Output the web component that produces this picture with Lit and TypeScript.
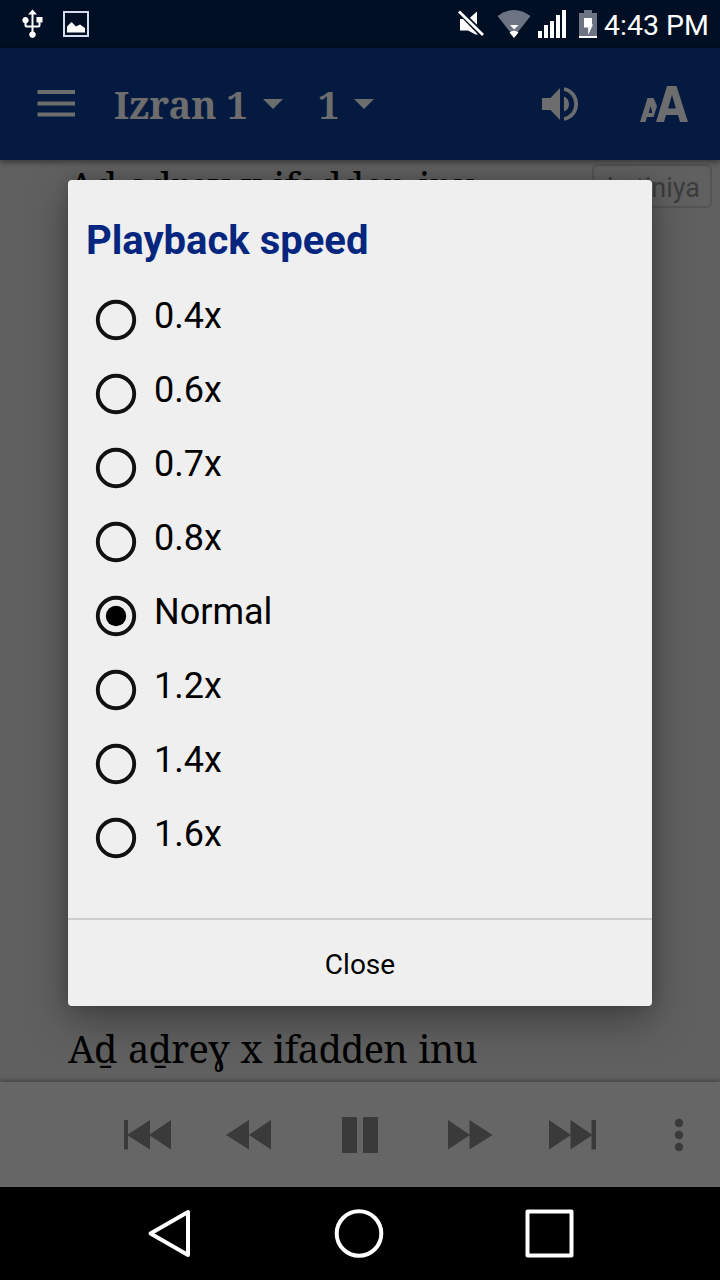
import { LitElement, html, css, svg } from "lit";
import { customElement, state } from "lit/decorators.js";

const glyph = (w: number, h: number, body: unknown) =>
  html`<svg width=${w} height=${h} viewBox="0 0 ${w} ${h}">${body}</svg>`;

@customElement("status-bar")
class StatusBar extends LitElement {
  static styles = css`
    :host { display: flex; align-items: center; height: 48px; background: #000f24; color: #fff; font: 28.500px/48px Roboto, sans-serif; }
    svg { display: block; }
    .icons { width: 604px; height: 48px; flex: none; }
    .clock { flex: 1; white-space: nowrap; padding-top: 3px; }
  `;
  render() {
    return html`
      <div class="icons">${glyph(604, 48, svg`
        <g fill="#fff">
          <path d="M32.500 9.500l4.500 5h-3.500v11h5v-3h-2v-5.500h6v5.500h-2v3q0 2-2 2h-5v4a3.300 3.300 0 1 1-2 0v-4h-5q-2 0-2-2v-2.200a3.200 3.200 0 1 1 2 0v2.200h5v-11h-3.500z"/>
          <path d="M67 32.500v-6l4.500-4.500 4.500 4.500 4-2 5 3.500v4.500z"/>
          <path d="M460 19h3l15 15.500h-2.500L468 30.500h-8zM477 11.500v16l-8.500-8.500z"/>
          <path d="M538 31h4v7h-4zM544 25h4v13h-4zM550 21h4v17h-4zM556 15h4v23h-4zM562 10h4v28h-4z"/>
        </g>
        <rect x="64" y="12" width="24" height="24" fill="none" stroke="#d5ddee" stroke-width="2"/>
        <path d="M460.500 10l24 23.500" stroke="#000f24" stroke-width="2"/>
        <path d="M459 11.500l24 23.500" stroke="#fff" stroke-width="2.800"/>
        <path d="M497.500 16q16.500-12 33 0l-16.500 21z" fill="#6c7484"/>
        <path d="M510 25h8.500l-4.200 4.500zM509.500 32.500q4.500-3.500 9 0l-4.500 5.500z" fill="#fff"/>
        <path d="M579 13h5v-3h8v3h5v23h-18z" fill="#6c7484"/>
        <path d="M579 36h18v2h-18zM584 18h8v6.500h1l-4.800 10.500v-7.500h-4.200z" fill="#fff"/>`)}</div>
      <div class="clock">4:43 PM</div>`;
  }
}

@customElement("app-bar")
class AppBar extends LitElement {
  static styles = css`
    :host { display: flex; align-items: center; height: 112px; box-sizing: border-box; padding: 0 31px 0 37px; background: #051a40; color: #6d6d6d; box-shadow: 0 2px 6px rgba(0,0,0,.45); position: relative; z-index: 1; }
    svg { display: block; flex: none; }
    .menu { margin-top: -2px; }
    .title { font: bold 38px/112px "Noto Serif", "DejaVu Serif", serif; white-space: nowrap; margin-top: -1px; }
    .book { margin-left: 39px; width: 149px; }
    .chapter { margin-left: 35px; width: 36px; }
    .space { flex: 1; }
    .size { margin: -1px 0 0 61px; }
  `;
  render() {
    const caret = glyph(20, 11, svg`<path d="M0 0h20l-10 10z" fill="#6d6d6d"/>`);
    return html`
      <div class="menu">${glyph(38, 27, svg`<path d="M0.500 0h37.500v4h-37.500zM0.500 11.500h37.500v4h-37.500zM0.500 22.500h37.500v4h-37.500z" fill="#6d6d6d"/>`)}</div>
      <div class="title book">Izran 1</div>${caret}
      <div class="title chapter">1</div>${caret}
      <div class="space"></div>
      ${glyph(38, 36, svg`<g fill="#6d6d6d" transform="translate(1,0)"><path d="M0 12h8.500L18 2v32L8.500 24H0zM22 10.500q5 2 5 7.500t-5 7.500z"/><path d="M22 3a14.500 15.200 0 0 1 0 30" fill="none" stroke="#6d6d6d" stroke-width="3.800"/></g>`)}
      <div class="size">${glyph(49, 36, svg`<g fill="#6d6d6d" fill-rule="evenodd"><path d="M0 36L7.500 12h6l3.500 8-3.500 11h-6.500L5.500 36zM8.700 27h3.600l-1.800-7z"/><path d="M16 36L27 0h9.500L48 36h-8l-2-7H26l-2 7zM28 22.500h8L32 9z"/></g>`)}</div>`;
  }
}

@customElement("player-bar")
class PlayerBar extends LitElement {
  static styles = css`
    :host { display: flex; align-items: center; height: 105px; background: #666; box-shadow: 0 -2px 4px rgba(0,0,0,.28); position: relative; }
    svg { display: block; }
  `;
  render() {
    return glyph(720, 105, svg`<g fill="#3a3a3a" transform="translate(0,-1082)">
      <path d="M124 1120h4v29.500h-4zM127 1135l23-15v29.500zM149 1135l22-15v29.500z"/>
      <path d="M226 1135l23-15v29.500zM249 1135l22-15v29.500z"/>
      <path d="M342 1117h15v36h-15zM363 1117h15v36h-15z"/>
      <path d="M448 1120l22 15-22 14.500zM469.500 1120l23 15-23 14.500z"/>
      <path d="M549 1120l22 15-22 14.500zM570.500 1120l22 15-22 14.500zM591.500 1120h4.500v29.500h-4.500z"/>
      <circle cx="679" cy="1123" r="4.200"/><circle cx="679" cy="1135" r="4.200"/><circle cx="679" cy="1147" r="4.200"/></g>`);
  }
}

@customElement("nav-bar")
class NavBar extends LitElement {
  static styles = css`
    :host { display: block; height: 93px; background: #000; }
    svg { display: block; }
  `;
  render() {
    return glyph(720, 93, svg`<g fill="none" stroke="#fff" stroke-width="4" stroke-linejoin="round" transform="translate(0,-1187)">
      <path d="M150.500 1233.500l37.500-21.500v43z"/>
      <circle cx="359" cy="1233.500" r="22.300"/>
      <rect x="527.500" y="1211.500" width="44" height="44"/></g>`);
  }
}

@customElement("speed-dialog")
class SpeedDialog extends LitElement {
  @state() selected = "Normal";
  static styles = css`
    :host { display: flex; flex-direction: column; box-sizing: border-box; width: 584px; height: 826px; border-radius: 4px; background: #efefef; color: #000; font-family: Roboto, sans-serif; box-shadow: 0 14px 40px rgba(0,0,0,.35), 0 0 14px rgba(0,0,0,.15); }
    .heading { margin: 37px 0 0 18px; font-size: 40px; line-height: 48px; font-weight: 700; color: #04267f; white-space: nowrap; }
    .list { margin: 17px 0 0 26px; flex: 1; }
    .row { display: flex; height: 74px; align-items: flex-start; font-size: 36px; cursor: pointer; }
    .row svg { display: block; margin-top: 16px; }
    .label { margin-left: 16px; line-height: 48px; padding-top: 10px; white-space: nowrap; }
    .close { height: 86px; border-top: 2px solid #cdcdcd; text-align: center; font-size: 28px; line-height: 89px; }
  `;
  render() {
    return html`
      <div class="heading">Playback speed</div>
      <div class="list">
        ${["0.4x", "0.6x", "0.7x", "0.8x", "Normal", "1.2x", "1.4x", "1.6x"].map(
          (s) => html`<div class="row" @click=${() => (this.selected = s)}>
            ${glyph(44, 44, svg`<circle cx="22" cy="22" r="18.200" fill="none" stroke="#111" stroke-width="3.900"/>${s === this.selected ? svg`<circle cx="22" cy="22" r="10.200"/>` : null}`)}
            <div class="label">${s}</div>
          </div>`
        )}
      </div>
      <div class="close">Close</div>`;
  }
}

@customElement("app-root")
class AppRoot extends LitElement {
  static styles = css`
    :host { display: flex; flex-direction: column; position: relative; width: 720px; height: 1280px; overflow: hidden; background: #606060; }
    .page { flex: 1; display: flex; flex-direction: column; justify-content: space-between; position: relative; overflow: hidden; }
    .verse { padding-left: 68px; font: 38px/50px "Noto Serif", "DejaVu Serif", serif; letter-spacing: -0.700px; word-spacing: 2px; color: #000; white-space: nowrap; }
    .verse:nth-child(2) { padding-bottom: 9px; }
    .script { position: absolute; right: 8px; top: 4px; box-sizing: border-box; width: 120px; height: 44px; border: 2px solid #545454; border-radius: 6px; padding-right: 10px; text-align: right; font: 27px/44px Roboto, sans-serif; color: #3c3c3c; }
    .dialog { position: absolute; left: 68px; top: 180px; z-index: 2; }
  `;
  render() {
    return html`
      <status-bar></status-bar>
      <app-bar></app-bar>
      <div class="page">
        <div class="verse">Aḏ aḏreɣ x ifadden inu</div>
        <div class="verse">Aḏ aḏreɣ x ifadden inu</div>
        <div class="script">Latiniya</div>
      </div>
      <player-bar></player-bar>
      <nav-bar></nav-bar>
      <speed-dialog class="dialog"></speed-dialog>`;
  }
}
